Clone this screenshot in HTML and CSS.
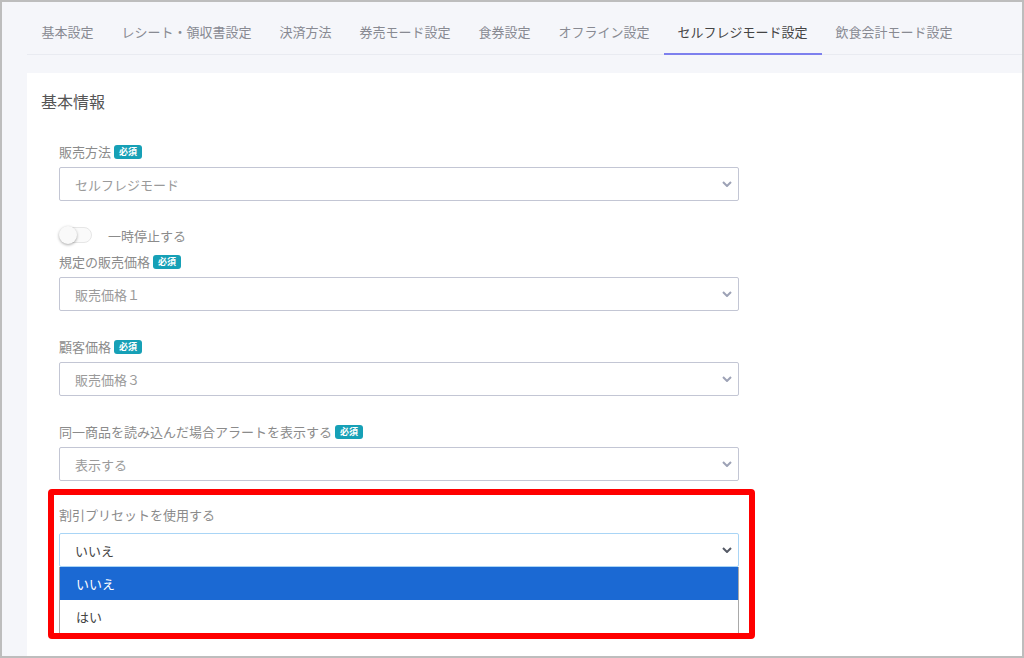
FILE: index.html
```html
<!DOCTYPE html>
<html lang="ja">
<head>
<meta charset="utf-8">
<link rel="stylesheet" href="styles.css">
</head>
<body>
<div class="frame">
  <nav class="tabs">
    <div class="tab">基本設定</div>
    <div class="tab">レシート・領収書設定</div>
    <div class="tab">決済方法</div>
    <div class="tab">券売モード設定</div>
    <div class="tab">食券設定</div>
    <div class="tab">オフライン設定</div>
    <div class="tab active">セルフレジモード設定</div>
    <div class="tab">飲食会計モード設定</div>
  </nav>
  <main class="card">
    <h2 class="heading">基本情報</h2>
    <div class="form">
      <div class="field">
        <div class="label">販売方法<span class="badge">必須</span></div>
        <div class="select"><span>セルフレジモード</span><svg class="chev" viewBox="0 0 10 6"><path d="M1 1l4 4 4-4"/></svg></div>
      </div>
      <div class="toggle-row">
        <span class="toggle"><span class="knob"></span></span>
        <span class="toggle-text">一時停止する</span>
      </div>
      <div class="field tight">
        <div class="label">規定の販売価格<span class="badge">必須</span></div>
        <div class="select"><span>販売価格１</span><svg class="chev" viewBox="0 0 10 6"><path d="M1 1l4 4 4-4"/></svg></div>
      </div>
      <div class="field">
        <div class="label">顧客価格<span class="badge">必須</span></div>
        <div class="select"><span>販売価格３</span><svg class="chev" viewBox="0 0 10 6"><path d="M1 1l4 4 4-4"/></svg></div>
      </div>
      <div class="field">
        <div class="label">同一商品を読み込んだ場合アラートを表示する<span class="badge">必須</span></div>
        <div class="select"><span>表示する</span><svg class="chev" viewBox="0 0 10 6"><path d="M1 1l4 4 4-4"/></svg></div>
      </div>
      <div class="field highlight">
        <div class="label">割引プリセットを使用する</div>
        <div class="select focused"><span>いいえ</span><svg class="chev dark" viewBox="0 0 10 6"><path d="M1 1l4 4 4-4"/></svg></div>
        <ul class="options">
          <li class="option selected">いいえ</li>
          <li class="option">はい</li>
        </ul>
        <div class="mark"></div>
      </div>
    </div>
  </main>
</div>
</body>
</html>
```

FILE: styles.css
```css
* { box-sizing: border-box; }
html, body { margin: 0; padding: 0; }
body {
  font-family: "Noto Sans CJK JP", "Noto Sans", sans-serif;
  font-size: 13px;
  color: #555;
}
.frame {
  width: 1024px;
  height: 658px;
  border: 2px solid #bdbdbd;
  background: #f5f6fa;
  padding: 8px 0 4px 25px;
  display: flex;
  flex-direction: column;
  overflow: hidden;
}
.tabs {
  display: flex;
  border-bottom: 1px solid #e9ebf1;
  height: 45px;
  flex-shrink: 0;
}
.tab {
  padding: 12px 14px 0;
  line-height: 20px;
  color: #888a92;
  white-space: nowrap;
  height: 44px;
}
.tab:first-child { padding-left: 14.5px; }
.tab.active {
  color: #444;
  border-bottom: 2px solid #7d80ee;
  height: 45px;
}
.card {
  margin-top: 18px;
  background: #fff;
  flex: 1;
  padding: 16px 14px 0;
}
.heading {
  margin: 0;
  font-size: 16px;
  line-height: 24px;
  font-weight: normal;
  color: #555;
}
.form {
  padding-left: 18px;
  padding-top: 29px;
  width: 698px;
}
.field { position: relative; margin-bottom: 26px; }
.field.tight { margin-top: 7px; }
.label {
  line-height: 20px;
  color: #8b8b8b;
  display: flex;
  align-items: center;
  margin-bottom: 5px;
}
.badge {
  display: inline-block;
  background: #16a0b6;
  color: #fff;
  font-size: 9px;
  font-weight: bold;
  line-height: 14px;
  padding: 0 5px;
  border-radius: 3px;
  margin-left: 3px;
}
.select {
  height: 34px;
  border: 1px solid #c3c6d4;
  border-radius: 2px;
  display: flex;
  align-items: center;
  justify-content: space-between;
  padding: 0 6px 0 15px;
  color: #9a9a9a;
}
.select.focused {
  border-color: #a9d5f6;
  color: #444;
}
.chev {
  width: 10px;
  height: 6px;
  fill: none;
  stroke: #9da2b6;
  stroke-width: 2;
}
.chev.dark { stroke: #555a66; }
.toggle-row {
  display: flex;
  align-items: center;
  height: 20px;
  margin-top: -2px;
}
.toggle {
  position: relative;
  width: 32px;
  height: 16px;
  border: 1px solid #e6e6e6;
  border-radius: 8px;
  background: #fafafa;
  margin-left: 1px;
}
.knob {
  position: absolute;
  left: -2px;
  top: -2px;
  width: 18px;
  height: 18px;
  border-radius: 50%;
  background: #f9f9f9;
  box-shadow: 0 1px 3px rgba(0,0,0,0.35);
}
.toggle-text {
  margin-left: 16px;
  color: #8b8b8b;
}
.highlight { margin-top: -2px; }
.highlight .label { margin-bottom: 8px; }
.options {
  list-style: none;
  margin: 0;
  padding: 0;
  border-left: 1px solid #a9a9a9;
  border-right: 1px solid #a9a9a9;
}
.option {
  height: 33px;
  line-height: 33px;
  padding-left: 16px;
  color: #444;
  background: #fff;
}
.option + .option { height: 34px; }
.option.selected {
  background: #1b69d3;
  color: #fff;
}
.mark {
  position: absolute;
  left: -11px;
  top: -16px;
  width: 707px;
  height: 150px;
  border: 6px solid #ff0000;
  border-radius: 4px;
  pointer-events: none;
}
```
